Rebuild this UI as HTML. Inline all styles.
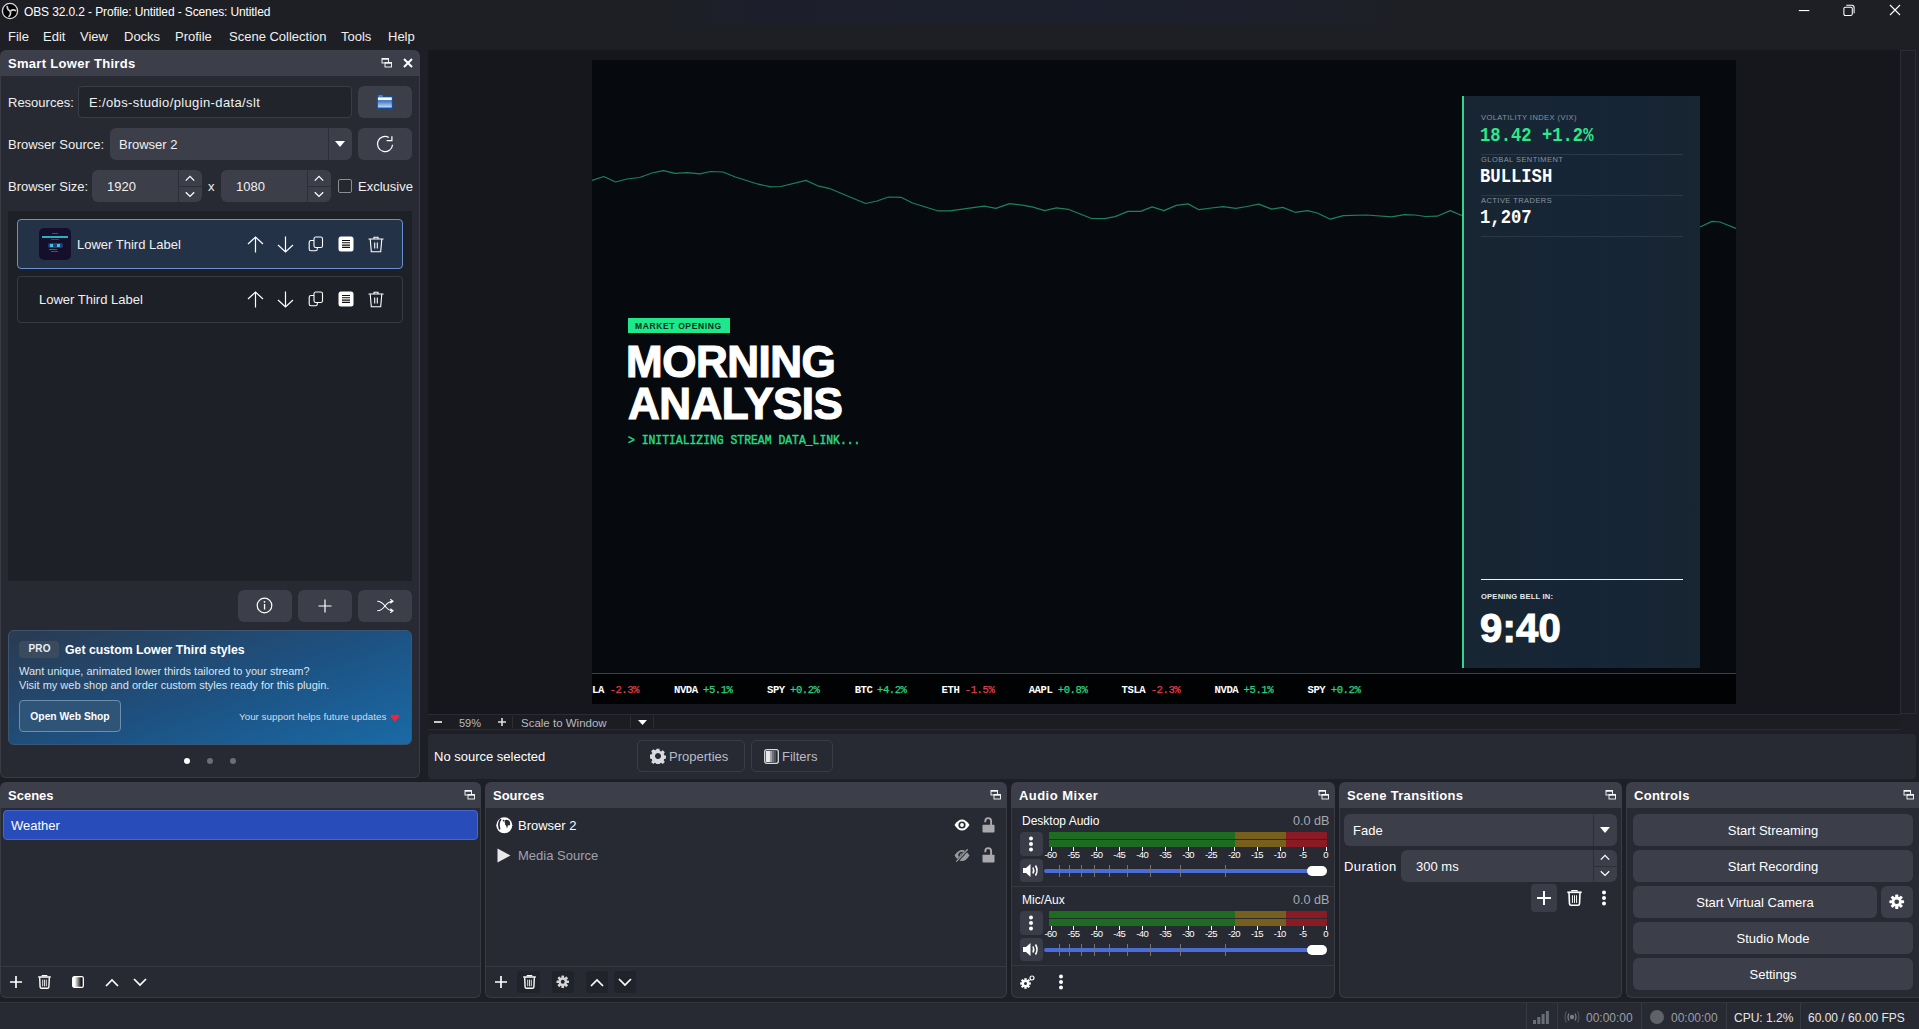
<!DOCTYPE html>
<html><head><meta charset="utf-8">
<style>
*{box-sizing:border-box;margin:0;padding:0}
html,body{width:1919px;height:1029px;overflow:hidden;background:#1d1e26;font-family:"Liberation Sans",sans-serif;color:#f0f0f0;font-size:13px}
.a{position:absolute}
.t{white-space:nowrap}
.dtitle{position:absolute;background:#3c3e4a;border-radius:6px 6px 0 0;height:26px}
.dtitle span{position:absolute;left:8px;top:6px;font-weight:bold;font-size:13px;color:#fff}
.dbody{position:absolute;background:#272a33;border:1px solid #383b44;border-top:none;border-radius:0 0 6px 6px}
.btn{position:absolute;background:#3c3e4a;border-radius:6px}
.ico{position:absolute}
</style></head><body>

<!-- title bar -->
<div class="a" style="left:0;top:0;width:1919px;height:24px;background:linear-gradient(90deg,#1e1f24 0px,#1e1f24 640px,#1c1f2b 760px,#1c1f2d 1100px,#1d1f2a 1300px,#1e1f24 1420px,#1e1f24 1919px)"></div>
<svg class="a" style="left:1px;top:2px" width="18" height="18" viewBox="0 0 18 18"><circle cx="9" cy="9" r="7.6" fill="#000" stroke="#d8d8d8" stroke-width="1.3"/><path d="M9.3 9.2Q6.3 8.2 6.2 4.6M9.3 9.2Q12 7 14.6 8.6M9.3 9.2Q10.2 12.3 8 14.5" fill="none" stroke="#d4d4d4" stroke-width="1.6" stroke-linecap="round"/><circle cx="9.3" cy="9.2" r="1" fill="#bbb"/></svg>
<div class="a t" style="left:24px;top:5px;font-size:12px;letter-spacing:-0.12px;color:#fff">OBS 32.0.2 - Profile: Untitled - Scenes: Untitled</div>
<svg class="a" style="left:1798px;top:9px" width="12" height="3" viewBox="0 0 12 3"><rect x="0.8" y="1" width="10.5" height="1.1" fill="#fff"/></svg>
<svg class="a" style="left:1843px;top:4px" width="12" height="12" viewBox="0 0 12 12"><rect x="0.9" y="3.2" width="8.4" height="8.2" rx="1.3" fill="none" stroke="#fff" stroke-width="1.05"/><path d="M3.3 1.3H8.9Q11.1 1.3 11.1 3.5V9.2" fill="none" stroke="#fff" stroke-width="1.05"/></svg>
<svg class="a" style="left:1889px;top:4px" width="12" height="12" viewBox="0 0 12 12"><path d="M1 1L11 11M11 1L1 11" stroke="#fff" stroke-width="1.1"/></svg>
<div class="a" style="left:0;top:24px;width:1919px;height:26px;background:#1e1f24"></div>
<!-- menu -->
<div class="a t" style="left:8px;top:29px;font-size:13px;color:#f0f0f0;word-spacing:0">
<span style="position:absolute;left:0">File</span><span style="position:absolute;left:35px">Edit</span><span style="position:absolute;left:72px">View</span><span style="position:absolute;left:116px">Docks</span><span style="position:absolute;left:167px">Profile</span><span style="position:absolute;left:221px">Scene&nbsp;Collection</span><span style="position:absolute;left:333px">Tools</span><span style="position:absolute;left:380px">Help</span></div>

<!-- Smart lower thirds dock -->
<div class="dtitle" style="left:0;top:50px;width:420px"><span style="letter-spacing:0.3px">Smart Lower Thirds</span></div>
<div class="dbody" style="left:0;top:76px;width:420px;height:702px"></div>


<!-- SLT content -->
<svg class="a" style="left:381px;top:57px" width="12" height="12" viewBox="0 0 12 12"><rect x="1" y="1.5" width="6.5" height="4.5" fill="none" stroke="#fff" stroke-width="0.9"/><rect x="1" y="1.5" width="6.5" height="1.2" fill="#fff"/><rect x="4" y="5.5" width="6.5" height="4.5" fill="#3c3e4a" stroke="#fff" stroke-width="0.9"/><rect x="4" y="5.5" width="6.5" height="1.2" fill="#fff"/></svg>
<svg class="a" style="left:403px;top:58px" width="10" height="10" viewBox="0 0 10 10"><path d="M1 1L9 9M9 1L1 9" stroke="#fff" stroke-width="2"/></svg>

<div class="a t" style="left:8px;top:95px">Resources:</div>
<div class="a" style="left:78px;top:86px;width:274px;height:32px;background:#22242b;border:1px solid #3a3d48;border-radius:4px"></div>
<div class="a t" style="left:89px;top:95px;letter-spacing:0.37px">E:/obs-studio/plugin-data/slt</div>
<div class="btn" style="left:358px;top:86px;width:54px;height:32px"></div>
<svg class="a" style="left:376px;top:94px" width="18" height="16" viewBox="0 0 18 16"><defs><linearGradient id="fldg" x1="0" y1="0" x2="0" y2="1"><stop offset="0" stop-color="#3b78cc"/><stop offset="1" stop-color="#c2dbfa"/></linearGradient></defs><path d="M0.6 2Q0.6 0.6 2 0.6H6.5L7.6 2H15.8Q17 2 17 3.2V14.6Q17 15.5 16 15.5H1.6Q0.6 15.5 0.6 14.5Z" fill="#1b4c8c"/><rect x="2.6" y="1.4" width="4.2" height="1.1" rx="0.5" fill="#8ab4ea"/><rect x="1.9" y="3.3" width="13.9" height="3" fill="#f4f8ff"/><rect x="1.9" y="6.9" width="13.9" height="6.6" fill="url(#fldg)"/></svg>

<div class="a t" style="left:8px;top:137px">Browser Source:</div>
<div class="btn" style="left:110px;top:128px;width:242px;height:32px"></div>
<div class="a" style="left:328px;top:128px;width:1px;height:32px;background:#2c2e38"></div>
<div class="a t" style="left:119px;top:137px">Browser 2</div>
<svg class="a" style="left:335px;top:141px" width="10" height="6" viewBox="0 0 10 6"><path d="M0 0H10L5 6Z" fill="#fff"/></svg>
<div class="btn" style="left:358px;top:128px;width:54px;height:32px"></div>
<svg class="a" style="left:375px;top:134px" width="20" height="20" viewBox="0 0 20 20"><path d="M17.6 10.8A7.6 7.6 0 1 1 13.8 3.42" fill="none" stroke="#fff" stroke-width="1.25"/><path d="M11.6 6.6H16.9V2.2" fill="none" stroke="#fff" stroke-width="1.25"/></svg>

<div class="a t" style="left:8px;top:179px">Browser Size:</div>
<div class="btn" style="left:92px;top:170px;width:110px;height:32px"></div>
<div class="a" style="left:178px;top:170px;width:1px;height:32px;background:#2c2e38"></div>
<div class="a" style="left:179px;top:186px;width:23px;height:1px;background:#2c2e38"></div>
<div class="a t" style="left:107px;top:179px">1920</div>
<svg class="a" style="left:184px;top:174px" width="12" height="26" viewBox="0 0 12 26"><path d="M1.8 6.6L6 2.4L10.2 6.6M1.8 18.2L6 22.4L10.2 18.2" fill="none" stroke="#fff" stroke-width="1.3"/></svg>
<div class="a t" style="left:208px;top:179px">x</div>
<div class="btn" style="left:221px;top:170px;width:110px;height:32px"></div>
<div class="a" style="left:307px;top:170px;width:1px;height:32px;background:#2c2e38"></div>
<div class="a" style="left:308px;top:186px;width:23px;height:1px;background:#2c2e38"></div>
<div class="a t" style="left:236px;top:179px">1080</div>
<svg class="a" style="left:313px;top:174px" width="12" height="26" viewBox="0 0 12 26"><path d="M1.8 6.6L6 2.4L10.2 6.6M1.8 18.2L6 22.4L10.2 18.2" fill="none" stroke="#fff" stroke-width="1.3"/></svg>
<div class="a" style="left:338px;top:179px;width:14px;height:14px;border:1px solid #8a8d96;border-radius:2px;background:#25282f"></div>
<div class="a t" style="left:358px;top:179px">Exclusive</div>

<!-- list -->
<div class="a" style="left:8px;top:211px;width:404px;height:370px;background:#1e2027"></div>
<div class="a" style="left:17px;top:219px;width:386px;height:50px;background:#243247;border:1px solid #6b90d2;border-radius:4px"></div>
<div class="a" style="left:39px;top:228px;width:32px;height:32px;background:#160f2c;border-radius:5px;overflow:hidden"><div class="a" style="left:13px;top:5px;width:6px;height:1px;background:#4a4a70"></div><div class="a" style="left:3px;top:8px;width:26px;height:2px;background:#22b4c4"></div><div class="a" style="left:12px;top:11px;width:8px;height:1px;background:#40406a"></div><div class="a" style="left:9px;top:15px;width:15px;height:5px;background:#1e3f7c;border-radius:2px"></div><div class="a" style="left:11px;top:16px;width:3px;height:3px;background:#3ac8d8"></div><div class="a" style="left:18px;top:16px;width:3px;height:3px;background:#3ac8d8"></div><div class="a" style="left:10px;top:21px;width:8px;height:1px;background:#7a3a9a"></div><div class="a" style="left:12px;top:23px;width:7px;height:1px;background:#6a3a8a"></div></div>
<div class="a t" style="left:77px;top:237px">Lower Third Label</div>
<div class="a" style="left:17px;top:276px;width:386px;height:47px;background:#1e2027;border:1px solid #383b44;border-radius:4px"></div>
<div class="a t" style="left:39px;top:292px">Lower Third Label</div>
<svg class="a" style="left:247px;top:236px" width="17" height="17" viewBox="0 0 17 17"><path d="M8.5 16.5V1.5M1 8L8.5 1L16 8" fill="none" stroke="#fff" stroke-width="1.2"/></svg>
<svg class="a" style="left:277px;top:236px" width="17" height="17" viewBox="0 0 17 17"><path d="M8.5 0.5V15.5M1 9L8.5 16L16 9" fill="none" stroke="#fff" stroke-width="1.2"/></svg>
<svg class="a" style="left:308px;top:236px" width="16" height="16" viewBox="0 0 16 16"><rect x="6" y="1" width="8.5" height="10.5" rx="1.8" fill="none" stroke="#fff" stroke-width="1.1"/><path d="M6 4.5H3Q1.2 4.5 1.2 6.3V13Q1.2 14.8 3 14.8H7.5Q9.3 14.8 9.3 13V11.5" fill="none" stroke="#fff" stroke-width="1.1"/></svg>
<svg class="a" style="left:338px;top:236px" width="16" height="16" viewBox="0 0 16 16"><rect x="0.5" y="0.5" width="15" height="15" rx="2.5" fill="#fff"/><path d="M4 4.5H12M4 6.8H12M4 9.1H12M4 11.4H12" stroke="#111" stroke-width="1.1"/></svg>
<svg class="a" style="left:368px;top:236px" width="16" height="17" viewBox="0 0 16 17"><path d="M0.5 3H15.5M6 3V1.2H10V3M2.2 3L3.3 15.8H12.7L13.8 3M6.7 6.5V12.5M9.3 6.5V12.5" fill="none" stroke="#fff" stroke-width="1.1"/></svg>
<svg class="a" style="left:247px;top:291px" width="17" height="17" viewBox="0 0 17 17"><path d="M8.5 16.5V1.5M1 8L8.5 1L16 8" fill="none" stroke="#fff" stroke-width="1.2"/></svg>
<svg class="a" style="left:277px;top:291px" width="17" height="17" viewBox="0 0 17 17"><path d="M8.5 0.5V15.5M1 9L8.5 16L16 9" fill="none" stroke="#fff" stroke-width="1.2"/></svg>
<svg class="a" style="left:308px;top:291px" width="16" height="16" viewBox="0 0 16 16"><rect x="6" y="1" width="8.5" height="10.5" rx="1.8" fill="none" stroke="#fff" stroke-width="1.1"/><path d="M6 4.5H3Q1.2 4.5 1.2 6.3V13Q1.2 14.8 3 14.8H7.5Q9.3 14.8 9.3 13V11.5" fill="none" stroke="#fff" stroke-width="1.1"/></svg>
<svg class="a" style="left:338px;top:291px" width="16" height="16" viewBox="0 0 16 16"><rect x="0.5" y="0.5" width="15" height="15" rx="2.5" fill="#fff"/><path d="M4 4.5H12M4 6.8H12M4 9.1H12M4 11.4H12" stroke="#111" stroke-width="1.1"/></svg>
<svg class="a" style="left:368px;top:291px" width="16" height="17" viewBox="0 0 16 17"><path d="M0.5 3H15.5M6 3V1.2H10V3M2.2 3L3.3 15.8H12.7L13.8 3M6.7 6.5V12.5M9.3 6.5V12.5" fill="none" stroke="#fff" stroke-width="1.1"/></svg>

<!-- bottom buttons -->
<div class="btn" style="left:238px;top:590px;width:54px;height:32px"></div>
<svg class="a" style="left:256px;top:597px" width="17" height="17" viewBox="0 0 17 17"><circle cx="8.5" cy="8.5" r="7.3" fill="none" stroke="#fff" stroke-width="1.2"/><rect x="7.9" y="7" width="1.3" height="5.5" fill="#fff"/><circle cx="8.5" cy="4.8" r="0.9" fill="#fff"/></svg>
<div class="btn" style="left:298px;top:590px;width:54px;height:32px"></div>
<svg class="a" style="left:318px;top:599px" width="14" height="14" viewBox="0 0 14 14"><path d="M7 0.5V13.5M0.5 7H13.5" stroke="#fff" stroke-width="1.2"/></svg>
<div class="btn" style="left:358px;top:590px;width:54px;height:32px"></div>
<svg class="a" style="left:377px;top:599px" width="17" height="14" viewBox="0 0 17 14"><path d="M0.3 2.2Q4.5 2.2 8 7T16 11.8M0.3 11.8Q4.5 11.8 8 7T16 2.2M13.3 0.2L16 2.2L13.3 4.2M13.3 9.8L16 11.8L13.3 13.8" fill="none" stroke="#fff" stroke-width="1.1"/></svg>

<!-- promo -->
<div class="a" style="left:8px;top:630px;width:404px;height:115px;border-radius:6px;border:1px solid #3b5673;background:linear-gradient(160deg,#2b3a50 0%,#1d5283 55%,#1a6aa6 100%)"></div>
<div class="a" style="left:19px;top:641px;width:40px;height:17px;background:#3a4b5f;border-radius:4px"></div>
<div class="a t" style="left:28.5px;top:642.5px;font-size:10px;font-weight:bold;letter-spacing:0.15px;color:#e8eef5">PRO</div>
<div class="a t" style="left:65px;top:643px;font-size:12.3px;font-weight:bold;color:#fff">Get custom Lower Third styles</div>
<div class="a t" style="left:19px;top:665px;font-size:11px;color:#dbe4ee">Want unique, animated lower thirds tailored to your stream?</div>
<div class="a t" style="left:19px;top:679px;font-size:11px;color:#dbe4ee">Visit my web shop and order custom styles ready for this plugin.</div>
<div class="a" style="left:19px;top:700px;width:102px;height:32px;background:#2e5478;border:1px solid #6e8eae;border-radius:4px"></div>
<div class="a t" style="left:19px;top:711px;width:102px;text-align:center;font-size:10.3px;font-weight:bold;color:#fff">Open Web Shop</div>
<div class="a t" style="left:239px;top:711px;font-size:9.85px;color:#cfdbe8">Your support helps future updates</div>
<svg class="a" style="left:390px;top:713.5px" width="10" height="8" viewBox="0 0 9 8"><path d="M4.5 7.5L1 4Q-0.5 2 1.2 0.8Q3 -0.2 4.5 1.8Q6 -0.2 7.8 0.8Q9.5 2 8 4Z" fill="#e8283c"/></svg>
<div class="a" style="left:184px;top:758px;width:6px;height:6px;border-radius:3px;background:#fff"></div>
<div class="a" style="left:207px;top:758px;width:6px;height:6px;border-radius:3px;background:#6b6e78"></div>
<div class="a" style="left:230px;top:758px;width:6px;height:6px;border-radius:3px;background:#6b6e78"></div>

<!-- preview -->
<div class="a" style="left:428px;top:50px;width:1472px;height:664px;background:#16171c"></div>
<div class="a" style="left:592px;top:60px;width:1144px;height:644px;background:#060a0f"></div>
<div class="a" style="left:1900px;top:50px;width:16px;height:664px;background:#1d1e25;border:1px solid #2a2c33"></div>

<!-- zoom bar -->
<div class="a" style="left:428px;top:714px;width:1472px;height:16px;background:#1c1d23;border-top:1px solid #2a2c33;border-bottom:1px solid #2a2c33"></div>

<!-- context bar -->
<div class="a" style="left:428px;top:734px;width:1488px;height:45px;background:#272a33;border-radius:4px"></div>


<!-- canvas content -->
<svg class="a" style="left:592px;top:60px" width="1144" height="644" viewBox="0 0 1144 644">
<polyline points="0.0,120.5 11.8,116.5 23.6,122.0 35.0,119.0 47.6,117.5 60.0,113.0 71.5,110.6 83.0,113.3 95.5,112.7 108.0,113.8 118.4,111.5 131.0,112.0 143.4,117.0 166.3,124.2 178.8,126.9 189.0,126.5 214.0,120.4 225.7,125.8 237.0,128.3 273.6,143.5 285.0,141.0 296.5,137.0 309.0,137.3 320.5,143.0 345.5,150.8 358.0,150.8 381.0,147.7 392.4,146.2 403.9,148.4 417.5,143.6 431.9,145.4 441.0,147.1 452.7,150.6 464.4,147.8 476.2,149.3 499.6,158.5 512.6,158.6 523.0,156.6 536.0,151.4 548.5,151.4 560.2,146.9 571.9,150.6 584.3,145.4 596.0,143.9 607.0,149.7 619.5,148.0 631.2,146.7 643.9,148.4 655.0,146.5 666.7,144.1 679.7,149.1 690.8,147.4 703.1,152.3 715.5,150.6 725.3,153.0 738.3,159.2 751.3,155.6 774.8,155.0 799.5,156.9 812.6,154.6 823.0,155.0 833.4,156.5 845.1,156.2 858.2,150.6 871.0,156.0" fill="none" stroke="#1d8159" stroke-width="1.2" stroke-linejoin="round"/>
<polyline points="1108.0,167.0 1120.0,161.4 1128.0,162.0 1144.0,168.4" fill="none" stroke="#1d8159" stroke-width="1.2" stroke-linejoin="round"/>
</svg>
<div class="a" style="left:1462px;top:96px;width:238px;height:572px;background:linear-gradient(90deg,#182532,#162537 60%,#182532);border-left:2px solid #34d48f"></div>
<div class="a t" style="left:1481px;top:113px;font-size:7.5px;letter-spacing:0.45px;color:#8893a2">VOLATILITY INDEX (VIX)</div>
<div class="a t" style="left:1480px;top:126px;font-family:'Liberation Mono',monospace;font-weight:bold;font-size:17.2px;transform:scaleY(1.15);transform-origin:0 8.5px;color:#2ee88a">18.42 +1.2%</div>
<div class="a" style="left:1481px;top:154px;width:202px;height:1px;background:#2d3846"></div>
<div class="a t" style="left:1481px;top:155px;font-size:7.5px;letter-spacing:0.45px;color:#8893a2">GLOBAL SENTIMENT</div>
<div class="a t" style="left:1480px;top:167px;font-family:'Liberation Mono',monospace;font-weight:bold;font-size:17.2px;transform:scaleY(1.15);transform-origin:0 8.5px;color:#fff">BULLISH</div>
<div class="a" style="left:1481px;top:195px;width:202px;height:1px;background:#2d3846"></div>
<div class="a t" style="left:1481px;top:196px;font-size:7.5px;letter-spacing:0.45px;color:#8893a2">ACTIVE TRADERS</div>
<div class="a t" style="left:1480px;top:208px;font-family:'Liberation Mono',monospace;font-weight:bold;font-size:17.2px;transform:scaleY(1.15);transform-origin:0 8.5px;color:#fff">1,207</div>
<div class="a" style="left:1481px;top:236px;width:202px;height:1px;background:#2d3846"></div>
<div class="a" style="left:1481px;top:578.6px;width:202px;height:1.6px;background:#eef0f3"></div>
<div class="a t" style="left:1481px;top:592px;font-size:7.6px;font-weight:bold;letter-spacing:0.2px;color:#e4e8ee">OPENING BELL IN:</div>
<div class="a t" style="left:1480px;top:605.5px;font-size:40px;font-weight:bold;letter-spacing:0.2px;color:#fff;-webkit-text-stroke:1.1px #fff">9:40</div>

<div class="a" style="left:628px;top:318px;width:102px;height:15px;background:#1ee88a"></div>
<div class="a t" style="left:635px;top:321px;font-size:8.5px;font-weight:bold;letter-spacing:0.63px;color:#06301c">MARKET OPENING</div>
<div class="a t" style="left:626px;top:339.5px;font-size:44px;font-weight:bold;letter-spacing:-0.5px;line-height:44px;color:#fff;-webkit-text-stroke:1.2px #fff">MORNING</div><div class="a t" style="left:628px;top:382.4px;font-size:44px;font-weight:bold;letter-spacing:-0.5px;line-height:44px;color:#fff;-webkit-text-stroke:1.2px #fff">ANALYSIS</div>
<div class="a t" style="left:628px;top:432.5px;font-family:'Liberation Mono',monospace;font-weight:normal;font-size:11.4px;color:#2ad883;-webkit-text-stroke:0.4px #2ad883;transform:scaleY(1.18);transform-origin:0 0">&gt; INITIALIZING STREAM DATA_LINK...</div>

<div class="a" style="left:592px;top:673px;width:1144px;height:31px;background:#010203;border-top:1px solid #3b3e44"></div>
<div class="a t" style="left:592px;top:684px;font-family:'Liberation Mono',monospace;font-weight:bold;font-size:10.6px;letter-spacing:-0.46px;color:#fff">LA</div><div class="a t" style="left:609.5px;top:684px;font-family:'Liberation Mono',monospace;font-weight:normal;-webkit-text-stroke:0.25px currentColor;font-size:10.6px;letter-spacing:-0.46px;color:#e0404a">-2.3%</div>
<div class="a t" style="left:674px;top:684px;font-family:'Liberation Mono',monospace;font-weight:bold;font-size:10.6px;letter-spacing:-0.46px;color:#fff">NVDA</div><div class="a t" style="left:703px;top:684px;font-family:'Liberation Mono',monospace;font-weight:normal;-webkit-text-stroke:0.25px currentColor;font-size:10.6px;letter-spacing:-0.46px;color:#2bd57e">+5.1%</div>
<div class="a t" style="left:767px;top:684px;font-family:'Liberation Mono',monospace;font-weight:bold;font-size:10.6px;letter-spacing:-0.46px;color:#fff">SPY</div><div class="a t" style="left:790px;top:684px;font-family:'Liberation Mono',monospace;font-weight:normal;-webkit-text-stroke:0.25px currentColor;font-size:10.6px;letter-spacing:-0.46px;color:#2bd57e">+0.2%</div>
<div class="a t" style="left:854.7px;top:684px;font-family:'Liberation Mono',monospace;font-weight:bold;font-size:10.6px;letter-spacing:-0.46px;color:#fff">BTC</div><div class="a t" style="left:877px;top:684px;font-family:'Liberation Mono',monospace;font-weight:normal;-webkit-text-stroke:0.25px currentColor;font-size:10.6px;letter-spacing:-0.46px;color:#2bd57e">+4.2%</div>
<div class="a t" style="left:941.6px;top:684px;font-family:'Liberation Mono',monospace;font-weight:bold;font-size:10.6px;letter-spacing:-0.46px;color:#fff">ETH</div><div class="a t" style="left:964.8px;top:684px;font-family:'Liberation Mono',monospace;font-weight:normal;-webkit-text-stroke:0.25px currentColor;font-size:10.6px;letter-spacing:-0.46px;color:#e0404a">-1.5%</div>
<div class="a t" style="left:1028.7px;top:684px;font-family:'Liberation Mono',monospace;font-weight:bold;font-size:10.6px;letter-spacing:-0.46px;color:#fff">AAPL</div><div class="a t" style="left:1057.8px;top:684px;font-family:'Liberation Mono',monospace;font-weight:normal;-webkit-text-stroke:0.25px currentColor;font-size:10.6px;letter-spacing:-0.46px;color:#2bd57e">+0.8%</div>
<div class="a t" style="left:1121.6px;top:684px;font-family:'Liberation Mono',monospace;font-weight:bold;font-size:10.6px;letter-spacing:-0.46px;color:#fff">TSLA</div><div class="a t" style="left:1150.7px;top:684px;font-family:'Liberation Mono',monospace;font-weight:normal;-webkit-text-stroke:0.25px currentColor;font-size:10.6px;letter-spacing:-0.46px;color:#e0404a">-2.3%</div>
<div class="a t" style="left:1214.6px;top:684px;font-family:'Liberation Mono',monospace;font-weight:bold;font-size:10.6px;letter-spacing:-0.46px;color:#fff">NVDA</div><div class="a t" style="left:1243.6px;top:684px;font-family:'Liberation Mono',monospace;font-weight:normal;-webkit-text-stroke:0.25px currentColor;font-size:10.6px;letter-spacing:-0.46px;color:#2bd57e">+5.1%</div>
<div class="a t" style="left:1307.5px;top:684px;font-family:'Liberation Mono',monospace;font-weight:bold;font-size:10.6px;letter-spacing:-0.46px;color:#fff">SPY</div><div class="a t" style="left:1330.8px;top:684px;font-family:'Liberation Mono',monospace;font-weight:normal;-webkit-text-stroke:0.25px currentColor;font-size:10.6px;letter-spacing:-0.46px;color:#2bd57e">+0.2%</div>

<!-- zoom bar content -->
<div class="a" style="left:434px;top:721px;width:8px;height:2px;background:#c8cad0"></div>
<div class="a t" style="left:459px;top:717px;font-size:11px;color:#b8bac0">59%</div>
<svg class="a" style="left:498px;top:718px" width="8" height="8" viewBox="0 0 8 8"><path d="M4 0V8M0 4H8" stroke="#e0e0e0" stroke-width="1.6"/></svg>
<div class="a" style="left:512px;top:716px;width:1px;height:12px;background:#2c2e36"></div>
<div class="a t" style="left:521px;top:717px;font-size:11.5px;color:#b8bac0">Scale to Window</div>
<div class="a" style="left:630px;top:716px;width:1px;height:12px;background:#2c2e36"></div>
<svg class="a" style="left:638px;top:720px" width="9" height="5" viewBox="0 0 9 5"><path d="M0 0H9L4.5 5Z" fill="#fff"/></svg>
<div class="a" style="left:653px;top:716px;width:1px;height:12px;background:#2c2e36"></div>

<!-- context bar content -->
<div class="a t" style="left:434px;top:749px;font-size:13px;color:#fff">No source selected</div>
<div class="a" style="left:637px;top:740px;width:108px;height:32px;border:1px solid #3a3d47;border-radius:5px"></div>
<svg class="a" style="left:650px;top:748px" width="16" height="16" viewBox="0 0 16 16"><path d="M6.6 0.8h2.8l0.4 2 1.3 0.6 1.7-1.1 2 2-1.1 1.7 0.6 1.3 2 0.4v2.8l-2 0.4-0.6 1.3 1.1 1.7-2 2-1.7-1.1-1.3 0.6-0.4 2H6.6l-0.4-2-1.3-0.6-1.7 1.1-2-2 1.1-1.7-0.6-1.3-2-0.4V6.6l2-0.4 0.6-1.3-1.1-1.7 2-2 1.7 1.1 1.3-0.6z M8 5a3 3 0 1 0 0.01 0z" fill="#d8dae0" fill-rule="evenodd"/></svg>
<div class="a t" style="left:669px;top:749px;font-size:13px;color:#b9bcc4">Properties</div>
<div class="a" style="left:751px;top:740px;width:82px;height:32px;border:1px solid #3a3d47;border-radius:5px"></div>
<svg class="a" style="left:764px;top:749px" width="15" height="15" viewBox="0 0 15 15"><rect x="0.7" y="0.7" width="13.6" height="13.6" rx="2" fill="#2a2c35" stroke="#d8dae0" stroke-width="1.3"/><rect x="2" y="2" width="4" height="11" fill="#e8e8e8"/><rect x="6" y="2" width="2" height="11" fill="#a0a0a8"/><rect x="8" y="2" width="2" height="11" fill="#707078"/><rect x="10" y="2" width="2" height="11" fill="#50525a"/></svg>
<div class="a t" style="left:782px;top:749px;font-size:13px;color:#b9bcc4">Filters</div>

<!-- bottom docks -->
<div class="dtitle" style="left:0;top:782px;width:481px"><span>Scenes</span></div>
<div class="dbody" style="left:0;top:808px;width:481px;height:190px"></div>
<div class="dtitle" style="left:485px;top:782px;width:522px"><span>Sources</span></div>
<div class="dbody" style="left:485px;top:808px;width:522px;height:190px"></div>
<div class="dtitle" style="left:1011px;top:782px;width:324px"><span style="letter-spacing:0.45px">Audio Mixer</span></div>
<div class="dbody" style="left:1011px;top:808px;width:324px;height:190px"></div>
<div class="dtitle" style="left:1339px;top:782px;width:283px"><span style="letter-spacing:0.3px">Scene Transitions</span></div>
<div class="dbody" style="left:1339px;top:808px;width:283px;height:190px"></div>
<div class="dtitle" style="left:1626px;top:782px;width:293px;border-top-right-radius:0"><span style="letter-spacing:0.28px">Controls</span></div>
<div class="dbody" style="left:1626px;top:808px;width:293px;height:190px;border-right:none;border-bottom-right-radius:0"></div>

<!-- status bar -->
<div class="a" style="left:0;top:1002px;width:1919px;height:27px;background:#272a33;border-top:1px solid #33363f"></div>

<svg class="a" style="left:464px;top:789px" width="12" height="12" viewBox="0 0 12 12"><rect x="1" y="1.5" width="6.5" height="4.5" fill="none" stroke="#fff" stroke-width="0.9"/><rect x="1" y="1.5" width="6.5" height="1.2" fill="#fff"/><rect x="4" y="5.5" width="6.5" height="4.5" fill="#3c3e4a" stroke="#fff" stroke-width="0.9"/><rect x="4" y="5.5" width="6.5" height="1.2" fill="#fff"/></svg><svg class="a" style="left:990px;top:789px" width="12" height="12" viewBox="0 0 12 12"><rect x="1" y="1.5" width="6.5" height="4.5" fill="none" stroke="#fff" stroke-width="0.9"/><rect x="1" y="1.5" width="6.5" height="1.2" fill="#fff"/><rect x="4" y="5.5" width="6.5" height="4.5" fill="#3c3e4a" stroke="#fff" stroke-width="0.9"/><rect x="4" y="5.5" width="6.5" height="1.2" fill="#fff"/></svg><svg class="a" style="left:1318px;top:789px" width="12" height="12" viewBox="0 0 12 12"><rect x="1" y="1.5" width="6.5" height="4.5" fill="none" stroke="#fff" stroke-width="0.9"/><rect x="1" y="1.5" width="6.5" height="1.2" fill="#fff"/><rect x="4" y="5.5" width="6.5" height="4.5" fill="#3c3e4a" stroke="#fff" stroke-width="0.9"/><rect x="4" y="5.5" width="6.5" height="1.2" fill="#fff"/></svg><svg class="a" style="left:1605px;top:789px" width="12" height="12" viewBox="0 0 12 12"><rect x="1" y="1.5" width="6.5" height="4.5" fill="none" stroke="#fff" stroke-width="0.9"/><rect x="1" y="1.5" width="6.5" height="1.2" fill="#fff"/><rect x="4" y="5.5" width="6.5" height="4.5" fill="#3c3e4a" stroke="#fff" stroke-width="0.9"/><rect x="4" y="5.5" width="6.5" height="1.2" fill="#fff"/></svg><svg class="a" style="left:1903px;top:789px" width="12" height="12" viewBox="0 0 12 12"><rect x="1" y="1.5" width="6.5" height="4.5" fill="none" stroke="#fff" stroke-width="0.9"/><rect x="1" y="1.5" width="6.5" height="1.2" fill="#fff"/><rect x="4" y="5.5" width="6.5" height="4.5" fill="#3c3e4a" stroke="#fff" stroke-width="0.9"/><rect x="4" y="5.5" width="6.5" height="1.2" fill="#fff"/></svg><div class="a" style="left:3px;top:810px;width:475px;height:30px;background:#284cb9;border:1px solid #4767cf;border-radius:4px"></div><div class="a t" style="left:11px;top:818px;font-size:13px;color:#fff">Weather</div><div class="a" style="left:1px;top:966px;width:479px;height:1px;background:#363942"></div><svg class="a" style="left:10px;top:976px" width="12" height="12" viewBox="0 0 13 13"><path d="M6.5 0V13M0 6.5H13" stroke="#fff" stroke-width="1.8"/></svg><svg class="a" style="left:38px;top:975px" width="13" height="14" viewBox="0 0 13 14"><path d="M0.2 2H12.8" stroke="#fff" stroke-width="1.5"/><path d="M4.3 1.3V0.6H8.7V1.3" fill="none" stroke="#fff" stroke-width="1.2"/><path d="M1.7 2.6L2.1 12Q2.2 13.3 3.5 13.3H9.5Q10.8 13.3 10.9 12L11.3 2.6" fill="none" stroke="#fff" stroke-width="1.4"/><path d="M4.7 4.6V11.3M6.5 4.6V11.3M8.3 4.6V11.3" stroke="#fff" stroke-width="0.85"/></svg><svg class="a" style="left:72px;top:976px" width="12" height="12" viewBox="0 0 12 12"><defs><linearGradient id="fgs" x1="0" x2="1"><stop offset="0.2" stop-color="#fff"/><stop offset="0.8" stop-color="#151515"/></linearGradient></defs><rect x="0.7" y="0.7" width="10.6" height="10.6" rx="1.6" fill="url(#fgs)" stroke="#fff" stroke-width="1.3"/></svg><svg class="a" style="left:105px;top:978px" width="14" height="9" viewBox="0 0 14 9"><path d="M1 8L7 2L13 8" fill="none" stroke="#fff" stroke-width="1.7"/></svg><svg class="a" style="left:133px;top:978px" width="14" height="9" viewBox="0 0 14 9"><path d="M1 1L7 7L13 1" fill="none" stroke="#fff" stroke-width="1.7"/></svg><svg class="a" style="left:496px;top:817px" width="17" height="17" viewBox="0 0 17 17"><circle cx="8.3" cy="8.3" r="8" fill="#fff"/><path d="M4.6 2.6Q1.8 6.5 3.6 11.8" fill="none" stroke="#272a33" stroke-width="1.7" stroke-linecap="round"/><path d="M9 3Q11 2.2 13 3.6Q14.6 5.6 14 8.2L12 8.3L11 11.5L10.1 8.6Q8.6 8 9.2 6.4Q8.2 5 9 3Z" fill="#272a33"/><circle cx="7.6" cy="3.6" r="0.9" fill="#272a33"/></svg><div class="a t" style="left:518px;top:818px;font-size:13px;color:#fff">Browser 2</div><svg class="a" style="left:497px;top:848px" width="14" height="15" viewBox="0 0 14 15"><path d="M0.5 0.5L13.5 7.5L0.5 14.5Z" fill="#e8e8ea"/></svg><div class="a t" style="left:518px;top:848px;font-size:13px;color:#a0a3aa">Media Source</div><svg class="a" style="left:954px;top:819px" width="16" height="12" viewBox="0 0 16 12"><path d="M0.5 6Q4 0.5 8 0.5Q12 0.5 15.5 6Q12 11.5 8 11.5Q4 11.5 0.5 6Z" fill="#fff"/><circle cx="8" cy="6" r="3.6" fill="#272a33"/><circle cx="8" cy="6" r="1.9" fill="#fff"/></svg><svg class="a" style="left:954px;top:848px" width="16" height="15" viewBox="0 0 16 15"><path d="M0.5 7.5Q4 2 8 2Q12 2 15.5 7.5Q12 13 8 13Q4 13 0.5 7.5Z" fill="#9b9b9e"/><path d="M5 8.2A3 3 0 0 1 8.6 4.6" fill="none" stroke="#272a33" stroke-width="1.6"/><circle cx="8" cy="7.5" r="0.9" fill="#272a33"/><path d="M2.3 14.2L14.2 1.2" stroke="#272a33" stroke-width="2.6"/><path d="M2.3 13.6L13.7 1.2" stroke="#9b9b9e" stroke-width="1.3"/></svg><svg class="a" style="left:981px;top:817px" width="14" height="16" viewBox="0 0 14 16"><path d="M4.3 5.2V4.2Q4.3 1.1 7.2 1.1Q10.1 1.1 10.1 4.2V8" fill="none" stroke="#a9a9ab" stroke-width="1.9"/><rect x="1.5" y="7.8" width="12" height="7.8" rx="0.8" fill="#a9a9ab"/></svg><svg class="a" style="left:981px;top:847px" width="14" height="16" viewBox="0 0 14 16"><path d="M4.3 5.2V4.2Q4.3 1.1 7.2 1.1Q10.1 1.1 10.1 4.2V8" fill="none" stroke="#a9a9ab" stroke-width="1.9"/><rect x="1.5" y="7.8" width="12" height="7.8" rx="0.8" fill="#a9a9ab"/></svg><div class="a" style="left:486px;top:966px;width:520px;height:1px;background:#363942"></div><svg class="a" style="left:495px;top:976px" width="12" height="12" viewBox="0 0 13 13"><path d="M6.5 0V13M0 6.5H13" stroke="#fff" stroke-width="1.8"/></svg><div class="a" style="left:517px;top:971px;width:23px;height:22px;background:#21232b;border-radius:3px"></div><div class="a" style="left:552px;top:971px;width:22px;height:22px;background:#21232b;border-radius:3px"></div><div class="a" style="left:586px;top:971px;width:22px;height:22px;background:#21232b;border-radius:3px"></div><div class="a" style="left:614px;top:971px;width:22px;height:22px;background:#21232b;border-radius:3px"></div><svg class="a" style="left:523px;top:975px" width="13" height="14" viewBox="0 0 13 14"><path d="M0.2 2H12.8" stroke="#fff" stroke-width="1.5"/><path d="M4.3 1.3V0.6H8.7V1.3" fill="none" stroke="#fff" stroke-width="1.2"/><path d="M1.7 2.6L2.1 12Q2.2 13.3 3.5 13.3H9.5Q10.8 13.3 10.9 12L11.3 2.6" fill="none" stroke="#fff" stroke-width="1.4"/><path d="M4.7 4.6V11.3M6.5 4.6V11.3M8.3 4.6V11.3" stroke="#fff" stroke-width="0.85"/></svg><svg class="a" style="left:556px;top:975px" width="13.5" height="13.5" viewBox="-8 -8 16 16"><g fill="#d6d6d8"><rect x="-1.6" y="-7.4" width="3.2" height="4.4" rx="0.7" transform="rotate(0)"/><rect x="-1.6" y="-7.4" width="3.2" height="4.4" rx="0.7" transform="rotate(45)"/><rect x="-1.6" y="-7.4" width="3.2" height="4.4" rx="0.7" transform="rotate(90)"/><rect x="-1.6" y="-7.4" width="3.2" height="4.4" rx="0.7" transform="rotate(135)"/><rect x="-1.6" y="-7.4" width="3.2" height="4.4" rx="0.7" transform="rotate(180)"/><rect x="-1.6" y="-7.4" width="3.2" height="4.4" rx="0.7" transform="rotate(225)"/><rect x="-1.6" y="-7.4" width="3.2" height="4.4" rx="0.7" transform="rotate(270)"/><rect x="-1.6" y="-7.4" width="3.2" height="4.4" rx="0.7" transform="rotate(315)"/><circle r="5.0"/></g><circle r="2.3" fill="#21232b"/></svg><svg class="a" style="left:590px;top:978px" width="14" height="9" viewBox="0 0 14 9"><path d="M1 8L7 2L13 8" fill="none" stroke="#fff" stroke-width="1.7"/></svg><svg class="a" style="left:618px;top:978px" width="14" height="9" viewBox="0 0 14 9"><path d="M1 1L7 7L13 1" fill="none" stroke="#fff" stroke-width="1.7"/></svg><div class="a t" style="left:1022px;top:814px;font-size:12px;color:#fff">Desktop Audio</div><div class="a t" style="left:1269.5px;top:813.5px;width:60px;text-align:right;font-size:12.6px;color:#a6a9b0">0.0 dB</div><div class="a" style="left:1020px;top:832px;width:23px;height:24px;background:#3a3d48;border-radius:4px"></div><svg class="a" style="left:1028px;top:836px" width="6" height="16" viewBox="0 0 6 16"><circle cx="3" cy="2.5" r="2" fill="#fff"/><circle cx="3" cy="8" r="2" fill="#fff"/><circle cx="3" cy="13.5" r="2" fill="#fff"/></svg><div class="a" style="left:1020px;top:859px;width:23px;height:23px;background:#3a3d48;border-radius:4px"></div><svg class="a" style="left:1022px;top:863px" width="18" height="15" viewBox="0 0 18 15"><path d="M1 5H4L8.5 1V14L4 10H1Z" fill="#fff"/><path d="M11 4.5Q12.5 7.5 11 10.5M13.5 2.5Q16.5 7.5 13.5 12.5" fill="none" stroke="#fff" stroke-width="1.6"/></svg><div class="a" style="left:1049px;top:832px;width:186px;height:7px;background:#1e6b22"></div><div class="a" style="left:1235px;top:832px;width:51px;height:7px;background:#77601e"></div><div class="a" style="left:1286px;top:832px;width:41px;height:7px;background:#8a1a24"></div><div class="a" style="left:1049px;top:840px;width:186px;height:7px;background:#1e6b22"></div><div class="a" style="left:1235px;top:840px;width:51px;height:7px;background:#77601e"></div><div class="a" style="left:1286px;top:840px;width:41px;height:7px;background:#8a1a24"></div><div class="a" style="left:1050.5px;top:847px;width:1px;height:4px;background:#fff"></div><div class="a t" style="left:1030.5px;top:849px;width:40px;text-align:center;font-size:9.5px;letter-spacing:-0.6px;color:#fff">-60</div><div class="a" style="left:1073.4px;top:847px;width:1px;height:4px;background:#fff"></div><div class="a t" style="left:1053.4px;top:849px;width:40px;text-align:center;font-size:9.5px;letter-spacing:-0.6px;color:#fff">-55</div><div class="a" style="left:1096.4px;top:847px;width:1px;height:4px;background:#fff"></div><div class="a t" style="left:1076.4px;top:849px;width:40px;text-align:center;font-size:9.5px;letter-spacing:-0.6px;color:#fff">-50</div><div class="a" style="left:1119.3px;top:847px;width:1px;height:4px;background:#fff"></div><div class="a t" style="left:1099.3px;top:849px;width:40px;text-align:center;font-size:9.5px;letter-spacing:-0.6px;color:#fff">-45</div><div class="a" style="left:1142.2px;top:847px;width:1px;height:4px;background:#fff"></div><div class="a t" style="left:1122.2px;top:849px;width:40px;text-align:center;font-size:9.5px;letter-spacing:-0.6px;color:#fff">-40</div><div class="a" style="left:1165.2px;top:847px;width:1px;height:4px;background:#fff"></div><div class="a t" style="left:1145.2px;top:849px;width:40px;text-align:center;font-size:9.5px;letter-spacing:-0.6px;color:#fff">-35</div><div class="a" style="left:1188.1px;top:847px;width:1px;height:4px;background:#fff"></div><div class="a t" style="left:1168.1px;top:849px;width:40px;text-align:center;font-size:9.5px;letter-spacing:-0.6px;color:#fff">-30</div><div class="a" style="left:1211.0px;top:847px;width:1px;height:4px;background:#fff"></div><div class="a t" style="left:1191.0px;top:849px;width:40px;text-align:center;font-size:9.5px;letter-spacing:-0.6px;color:#fff">-25</div><div class="a" style="left:1233.9px;top:847px;width:1px;height:4px;background:#fff"></div><div class="a t" style="left:1213.9px;top:849px;width:40px;text-align:center;font-size:9.5px;letter-spacing:-0.6px;color:#fff">-20</div><div class="a" style="left:1256.9px;top:847px;width:1px;height:4px;background:#fff"></div><div class="a t" style="left:1236.9px;top:849px;width:40px;text-align:center;font-size:9.5px;letter-spacing:-0.6px;color:#fff">-15</div><div class="a" style="left:1279.8px;top:847px;width:1px;height:4px;background:#fff"></div><div class="a t" style="left:1259.8px;top:849px;width:40px;text-align:center;font-size:9.5px;letter-spacing:-0.6px;color:#fff">-10</div><div class="a" style="left:1302.7px;top:847px;width:1px;height:4px;background:#fff"></div><div class="a t" style="left:1282.7px;top:849px;width:40px;text-align:center;font-size:9.5px;letter-spacing:-0.6px;color:#fff">-5</div><div class="a" style="left:1325.7px;top:847px;width:1px;height:4px;background:#fff"></div><div class="a t" style="left:1305.7px;top:849px;width:40px;text-align:center;font-size:9.5px;letter-spacing:-0.6px;color:#fff">0</div><div class="a" style="left:1044px;top:869px;width:270px;height:4px;background:#4b6bd8;border-radius:2px"></div><div class="a" style="left:1059px;top:865px;width:1px;height:12px;background:#70737b"></div><div class="a" style="left:1069px;top:865px;width:1px;height:12px;background:#70737b"></div><div class="a" style="left:1081px;top:865px;width:1px;height:12px;background:#70737b"></div><div class="a" style="left:1094px;top:865px;width:1px;height:12px;background:#70737b"></div><div class="a" style="left:1109px;top:865px;width:1px;height:12px;background:#70737b"></div><div class="a" style="left:1127px;top:865px;width:1px;height:12px;background:#70737b"></div><div class="a" style="left:1150px;top:865px;width:1px;height:12px;background:#70737b"></div><div class="a" style="left:1180px;top:865px;width:1px;height:12px;background:#70737b"></div><div class="a" style="left:1225px;top:865px;width:1px;height:12px;background:#70737b"></div><div class="a" style="left:1307px;top:866px;width:20px;height:10px;background:#fff;border-radius:5px"></div><div class="a" style="left:1012px;top:886px;width:322px;height:1px;background:#363942"></div><div class="a t" style="left:1022px;top:893px;font-size:12px;color:#fff">Mic/Aux</div><div class="a t" style="left:1269.5px;top:892.5px;width:60px;text-align:right;font-size:12.6px;color:#a6a9b0">0.0 dB</div><div class="a" style="left:1020px;top:911px;width:23px;height:24px;background:#3a3d48;border-radius:4px"></div><svg class="a" style="left:1028px;top:915px" width="6" height="16" viewBox="0 0 6 16"><circle cx="3" cy="2.5" r="2" fill="#fff"/><circle cx="3" cy="8" r="2" fill="#fff"/><circle cx="3" cy="13.5" r="2" fill="#fff"/></svg><div class="a" style="left:1020px;top:938px;width:23px;height:23px;background:#3a3d48;border-radius:4px"></div><svg class="a" style="left:1022px;top:942px" width="18" height="15" viewBox="0 0 18 15"><path d="M1 5H4L8.5 1V14L4 10H1Z" fill="#fff"/><path d="M11 4.5Q12.5 7.5 11 10.5M13.5 2.5Q16.5 7.5 13.5 12.5" fill="none" stroke="#fff" stroke-width="1.6"/></svg><div class="a" style="left:1049px;top:911px;width:186px;height:7px;background:#1e6b22"></div><div class="a" style="left:1235px;top:911px;width:51px;height:7px;background:#77601e"></div><div class="a" style="left:1286px;top:911px;width:41px;height:7px;background:#8a1a24"></div><div class="a" style="left:1049px;top:919px;width:186px;height:7px;background:#1e6b22"></div><div class="a" style="left:1235px;top:919px;width:51px;height:7px;background:#77601e"></div><div class="a" style="left:1286px;top:919px;width:41px;height:7px;background:#8a1a24"></div><div class="a" style="left:1050.5px;top:926px;width:1px;height:4px;background:#fff"></div><div class="a t" style="left:1030.5px;top:928px;width:40px;text-align:center;font-size:9.5px;letter-spacing:-0.6px;color:#fff">-60</div><div class="a" style="left:1073.4px;top:926px;width:1px;height:4px;background:#fff"></div><div class="a t" style="left:1053.4px;top:928px;width:40px;text-align:center;font-size:9.5px;letter-spacing:-0.6px;color:#fff">-55</div><div class="a" style="left:1096.4px;top:926px;width:1px;height:4px;background:#fff"></div><div class="a t" style="left:1076.4px;top:928px;width:40px;text-align:center;font-size:9.5px;letter-spacing:-0.6px;color:#fff">-50</div><div class="a" style="left:1119.3px;top:926px;width:1px;height:4px;background:#fff"></div><div class="a t" style="left:1099.3px;top:928px;width:40px;text-align:center;font-size:9.5px;letter-spacing:-0.6px;color:#fff">-45</div><div class="a" style="left:1142.2px;top:926px;width:1px;height:4px;background:#fff"></div><div class="a t" style="left:1122.2px;top:928px;width:40px;text-align:center;font-size:9.5px;letter-spacing:-0.6px;color:#fff">-40</div><div class="a" style="left:1165.2px;top:926px;width:1px;height:4px;background:#fff"></div><div class="a t" style="left:1145.2px;top:928px;width:40px;text-align:center;font-size:9.5px;letter-spacing:-0.6px;color:#fff">-35</div><div class="a" style="left:1188.1px;top:926px;width:1px;height:4px;background:#fff"></div><div class="a t" style="left:1168.1px;top:928px;width:40px;text-align:center;font-size:9.5px;letter-spacing:-0.6px;color:#fff">-30</div><div class="a" style="left:1211.0px;top:926px;width:1px;height:4px;background:#fff"></div><div class="a t" style="left:1191.0px;top:928px;width:40px;text-align:center;font-size:9.5px;letter-spacing:-0.6px;color:#fff">-25</div><div class="a" style="left:1233.9px;top:926px;width:1px;height:4px;background:#fff"></div><div class="a t" style="left:1213.9px;top:928px;width:40px;text-align:center;font-size:9.5px;letter-spacing:-0.6px;color:#fff">-20</div><div class="a" style="left:1256.9px;top:926px;width:1px;height:4px;background:#fff"></div><div class="a t" style="left:1236.9px;top:928px;width:40px;text-align:center;font-size:9.5px;letter-spacing:-0.6px;color:#fff">-15</div><div class="a" style="left:1279.8px;top:926px;width:1px;height:4px;background:#fff"></div><div class="a t" style="left:1259.8px;top:928px;width:40px;text-align:center;font-size:9.5px;letter-spacing:-0.6px;color:#fff">-10</div><div class="a" style="left:1302.7px;top:926px;width:1px;height:4px;background:#fff"></div><div class="a t" style="left:1282.7px;top:928px;width:40px;text-align:center;font-size:9.5px;letter-spacing:-0.6px;color:#fff">-5</div><div class="a" style="left:1325.7px;top:926px;width:1px;height:4px;background:#fff"></div><div class="a t" style="left:1305.7px;top:928px;width:40px;text-align:center;font-size:9.5px;letter-spacing:-0.6px;color:#fff">0</div><div class="a" style="left:1044px;top:948px;width:270px;height:4px;background:#4b6bd8;border-radius:2px"></div><div class="a" style="left:1059px;top:944px;width:1px;height:12px;background:#70737b"></div><div class="a" style="left:1069px;top:944px;width:1px;height:12px;background:#70737b"></div><div class="a" style="left:1081px;top:944px;width:1px;height:12px;background:#70737b"></div><div class="a" style="left:1094px;top:944px;width:1px;height:12px;background:#70737b"></div><div class="a" style="left:1109px;top:944px;width:1px;height:12px;background:#70737b"></div><div class="a" style="left:1127px;top:944px;width:1px;height:12px;background:#70737b"></div><div class="a" style="left:1150px;top:944px;width:1px;height:12px;background:#70737b"></div><div class="a" style="left:1180px;top:944px;width:1px;height:12px;background:#70737b"></div><div class="a" style="left:1225px;top:944px;width:1px;height:12px;background:#70737b"></div><div class="a" style="left:1307px;top:945px;width:20px;height:10px;background:#fff;border-radius:5px"></div><div class="a" style="left:1012px;top:965px;width:322px;height:1px;background:#363942"></div><svg class="a" style="left:1020px;top:975px" width="15" height="14" viewBox="0 0 15 14"><g transform="translate(5.5 8.5)"><g fill="#fff"><rect x="-1.2" y="-5.3" width="2.4" height="2.6" transform="rotate(0)"/><rect x="-1.2" y="-5.3" width="2.4" height="2.6" transform="rotate(45)"/><rect x="-1.2" y="-5.3" width="2.4" height="2.6" transform="rotate(90)"/><rect x="-1.2" y="-5.3" width="2.4" height="2.6" transform="rotate(135)"/><rect x="-1.2" y="-5.3" width="2.4" height="2.6" transform="rotate(180)"/><rect x="-1.2" y="-5.3" width="2.4" height="2.6" transform="rotate(225)"/><rect x="-1.2" y="-5.3" width="2.4" height="2.6" transform="rotate(270)"/><rect x="-1.2" y="-5.3" width="2.4" height="2.6" transform="rotate(315)"/></g><circle r="3.6" fill="#fff"/><circle r="1.5" fill="#272a33"/></g><circle cx="12" cy="3" r="2" fill="none" stroke="#fff" stroke-width="1.2"/></svg><svg class="a" style="left:1058px;top:974px" width="6" height="16" viewBox="0 0 6 16"><circle cx="3" cy="2.5" r="2" fill="#fff"/><circle cx="3" cy="8" r="2" fill="#fff"/><circle cx="3" cy="13.5" r="2" fill="#fff"/></svg><div class="btn" style="left:1344px;top:814px;width:273px;height:32px"></div><div class="a" style="left:1593px;top:814px;width:1px;height:32px;background:#2c2e38"></div><div class="a t" style="left:1353px;top:823px;font-size:13px;color:#fff">Fade</div><svg class="a" style="left:1600px;top:827px" width="10" height="6" viewBox="0 0 10 6"><path d="M0 0H10L5 6Z" fill="#fff"/></svg><div class="a t" style="left:1344px;top:859px;font-size:13px;letter-spacing:0.45px;color:#fff">Duration</div><div class="btn" style="left:1401px;top:850px;width:216px;height:32px"></div><div class="a" style="left:1593px;top:850px;width:1px;height:32px;background:#2c2e38"></div><div class="a" style="left:1594px;top:866px;width:23px;height:1px;background:#2c2e38"></div><div class="a t" style="left:1416px;top:859px;font-size:13px;color:#fff">300 ms</div><svg class="a" style="left:1599px;top:853px" width="12" height="26" viewBox="0 0 12 26"><path d="M1.8 6.6L6 2.4L10.2 6.6M1.8 18.2L6 22.4L10.2 18.2" fill="none" stroke="#fff" stroke-width="1.3"/></svg><div class="a" style="left:1531px;top:884px;width:26px;height:28px;background:#3a3d48;border-radius:4px"></div><svg class="a" style="left:1537px;top:891px" width="14" height="14" viewBox="0 0 13 13"><path d="M6.5 0V13M0 6.5H13" stroke="#fff" stroke-width="1.8"/></svg><svg class="a" style="left:1567px;top:890px" width="15" height="16" viewBox="0 0 13 14"><path d="M0.2 2H12.8" stroke="#fff" stroke-width="1.5"/><path d="M4.3 1.3V0.6H8.7V1.3" fill="none" stroke="#fff" stroke-width="1.2"/><path d="M1.7 2.6L2.1 12Q2.2 13.3 3.5 13.3H9.5Q10.8 13.3 10.9 12L11.3 2.6" fill="none" stroke="#fff" stroke-width="1.4"/><path d="M4.7 4.6V11.3M6.5 4.6V11.3M8.3 4.6V11.3" stroke="#fff" stroke-width="0.85"/></svg><svg class="a" style="left:1601px;top:890px" width="6" height="16" viewBox="0 0 6 16"><circle cx="3" cy="2.5" r="2" fill="#fff"/><circle cx="3" cy="8" r="2" fill="#fff"/><circle cx="3" cy="13.5" r="2" fill="#fff"/></svg><div class="btn" style="left:1633px;top:814px;width:280px;height:32px"></div><div class="a t" style="left:1633px;top:823px;width:280px;text-align:center;font-size:13px;color:#fff">Start Streaming</div><div class="btn" style="left:1633px;top:850px;width:280px;height:32px"></div><div class="a t" style="left:1633px;top:859px;width:280px;text-align:center;font-size:13px;color:#fff">Start Recording</div><div class="btn" style="left:1633px;top:922px;width:280px;height:32px"></div><div class="a t" style="left:1633px;top:931px;width:280px;text-align:center;font-size:13px;color:#fff">Studio Mode</div><div class="btn" style="left:1633px;top:958px;width:280px;height:32px"></div><div class="a t" style="left:1633px;top:967px;width:280px;text-align:center;font-size:13px;color:#fff">Settings</div><div class="btn" style="left:1633px;top:886px;width:244px;height:32px"></div><div class="a t" style="left:1633px;top:895px;width:244px;text-align:center;font-size:13px;color:#fff">Start Virtual Camera</div><div class="btn" style="left:1881px;top:886px;width:32px;height:32px"></div><svg class="a" style="left:1889px;top:894px" width="15.5" height="15.5" viewBox="-8 -8 16 16"><g fill="#fff"><rect x="-1.6" y="-7.6" width="3.2" height="4.6" rx="0.7" transform="rotate(0)"/><rect x="-1.6" y="-7.6" width="3.2" height="4.6" rx="0.7" transform="rotate(45)"/><rect x="-1.6" y="-7.6" width="3.2" height="4.6" rx="0.7" transform="rotate(90)"/><rect x="-1.6" y="-7.6" width="3.2" height="4.6" rx="0.7" transform="rotate(135)"/><rect x="-1.6" y="-7.6" width="3.2" height="4.6" rx="0.7" transform="rotate(180)"/><rect x="-1.6" y="-7.6" width="3.2" height="4.6" rx="0.7" transform="rotate(225)"/><rect x="-1.6" y="-7.6" width="3.2" height="4.6" rx="0.7" transform="rotate(270)"/><rect x="-1.6" y="-7.6" width="3.2" height="4.6" rx="0.7" transform="rotate(315)"/><circle r="5.2"/></g><circle r="2.4" fill="#3c3e4a"/></svg><div class="a" style="left:1526px;top:1003px;width:1px;height:26px;background:#363942"></div><div class="a" style="left:1557px;top:1003px;width:1px;height:26px;background:#363942"></div><div class="a" style="left:1641px;top:1003px;width:1px;height:26px;background:#363942"></div><div class="a" style="left:1726px;top:1003px;width:1px;height:26px;background:#363942"></div><div class="a" style="left:1800px;top:1003px;width:1px;height:26px;background:#363942"></div><svg class="a" style="left:1533px;top:1010px" width="16" height="14" viewBox="0 0 16 14"><rect x="0" y="10" width="3" height="4" fill="#6a6d75"/><rect x="4.3" y="7" width="3" height="7" fill="#6a6d75"/><rect x="8.6" y="4" width="3" height="10" fill="#6a6d75"/><rect x="12.9" y="1" width="3" height="13" fill="#6a6d75"/></svg><svg class="a" style="left:1564px;top:1010px" width="16" height="14" viewBox="0 0 16 14"><circle cx="8" cy="7" r="2.2" fill="#7a7d85"/><path d="M5 3.5Q3 7 5 10.5M11 3.5Q13 7 11 10.5" fill="none" stroke="#7a7d85" stroke-width="1.3"/><path d="M2.5 1.5Q-0.5 7 2.5 12.5M13.5 1.5Q16.5 7 13.5 12.5" fill="none" stroke="#50535a" stroke-width="1.2"/></svg><div class="a t" style="left:1586px;top:1011px;font-size:12px;color:#9a9da5">00:00:00</div><div class="a" style="left:1650px;top:1010px;width:14px;height:14px;border-radius:7px;background:#5f6269"></div><div class="a t" style="left:1671px;top:1011px;font-size:12px;color:#9a9da5">00:00:00</div><div class="a t" style="left:1734px;top:1011px;font-size:12px;color:#e6e6e6">CPU: 1.2%</div><div class="a t" style="left:1808px;top:1011px;font-size:12px;color:#e6e6e6">60.00 / 60.00 FPS</div>
</body></html>
